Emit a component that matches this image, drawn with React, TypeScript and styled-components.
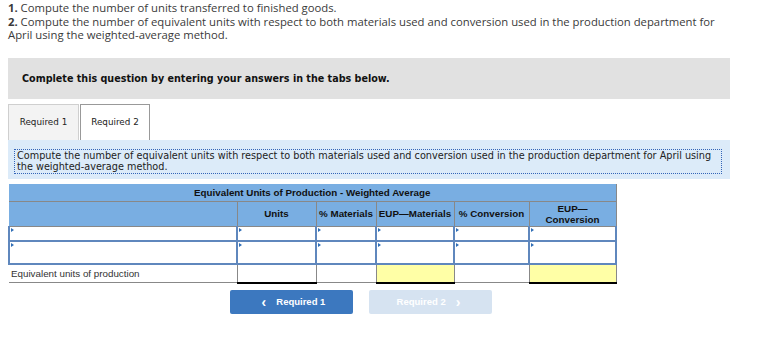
import React from "react";
import styled, { createGlobalStyle } from "styled-components";

const GlobalStyle = createGlobalStyle`
  body {
    margin: 0;
    padding: 0 8px;
    background: #ffffff;
    font-family: "Open Sans", "Liberation Sans", sans-serif;
  }
`;

const columns = [228, 79, 60, 78, 75, 87];

const rows = [{ tall: false }, { tall: true }];

const App = () => {
  return (
    <Page>
      <GlobalStyle />
      <Question>
        <Line>
          <b>1.</b> Compute the number of units transferred to finished goods.
        </Line>
        <Line>
          <b>2.</b> Compute the number of equivalent units with respect to both
          materials used and conversion used in the production department for
          April using the weighted-average method.
        </Line>
      </Question>

      <Notice>Complete this question by entering your answers in the tabs below.</Notice>

      <Tabs>
        <Tab>Required 1</Tab>
        <Tab $active>Required 2</Tab>
      </Tabs>

      <Panel>
        <Prompt>
          Compute the number of equivalent units with respect to both materials
          used and conversion used in the production department for April using
          the weighted-average method.
        </Prompt>
      </Panel>

      <Grid>
        <colgroup>
          {columns.map((w, i) => (
            <col key={i} style={{ width: w }} />
          ))}
        </colgroup>
        <thead>
          <tr>
            <Title colSpan={6}>Equivalent Units of Production - Weighted Average</Title>
          </tr>
          <tr>
            <Head></Head>
            <Head>Units</Head>
            <Head>% Materials</Head>
            <Head>EUP—Materials</Head>
            <Head>% Conversion</Head>
            <Head>
              EUP—
              <br />
              Conversion
            </Head>
          </tr>
        </thead>
        <tbody>
          {rows.map((r, i) => (
            <tr key={i}>
              {columns.map((_, c) => (
                <Input key={c} $tall={r.tall}>
                  <Flag />
                </Input>
              ))}
            </tr>
          ))}
          <tr>
            <Label>Equivalent units of production</Label>
            <Total $boxed />
            <Total />
            <Total $boxed $yellow />
            <Total />
            <Total $boxed $yellow />
          </tr>
        </tbody>
      </Grid>

      <Nav>
        <NavButton>
          <Chev>‹</Chev> Required 1
        </NavButton>
        <NavButton $disabled>
          Required 2 <Chev>›</Chev>
        </NavButton>
      </Nav>
    </Page>
  );
};

export default App;

const Page = styled.div`
  width: 745px;
  padding-top: 1px;
`;

const Question = styled.div`
  width: 712px;
  color: #3a3a3a;
  font-size: 11.3px;
  line-height: 13.5px;
  b {
    font-weight: 700;
  }
`;

const Line = styled.div`
  margin: 0;
`;

const Notice = styled.div`
  margin-top: 16px;
  width: 708px;
  height: 41px;
  padding-left: 14px;
  display: flex;
  align-items: center;
  background: #e1e1e1;
  font-family: "DejaVu Sans", Verdana, sans-serif;
  font-weight: bold;
  font-size: 9.6px;
  color: #111;
`;

const Tabs = styled.div`
  display: flex;
  margin-top: 5px;
  gap: 1px;
`;

const Tab = styled.div<{ $active?: boolean }>`
  width: ${(p) => (p.$active ? "68px" : "69px")};
  height: 35px;
  display: flex;
  align-items: center;
  justify-content: center;
  border: 1px solid ${(p) => (p.$active ? "#999" : "#cfcfcf")};
  border-bottom: none;
  background: ${(p) => (p.$active ? "#fff" : "#f3f3f3")};
  font-family: "DejaVu Sans", Verdana, sans-serif;
  font-size: 8.8px;
  color: #222;
`;

const Panel = styled.div`
  width: 722px;
  height: 39px;
  box-sizing: border-box;
  padding: 9px 8px 0 6px;
  background: #dcebf9;
`;

const Prompt = styled.div`
  border: 1px dotted #3465b8;
  padding: 0 2px;
  font-family: "DejaVu Sans", Verdana, sans-serif;
  font-size: 9.7px;
  line-height: 11.5px;
  color: #222;
`;

const Grid = styled.table`
  margin-top: 5px;
  width: 607px;
  border-collapse: collapse;
  font-family: "Liberation Sans", Arial, sans-serif;
  font-size: 9.8px;
  color: #111;
  table-layout: fixed;
`;

const Title = styled.th`
  height: 17px;
  padding: 0;
  background: #79aee2;
  border-right: 1px solid #888;
  font-weight: bold;
  text-align: center;
`;

const Head = styled.th`
  height: 24px;
  padding: 0;
  background: #79aee2;
  border: 1px solid #888;
  font-weight: bold;
  text-align: center;
  line-height: 11px;
  &:first-child {
    border-left: none;
  }
`;

const Input = styled.td<{ $tall: boolean }>`
  position: relative;
  height: ${(p) => (p.$tall ? "21px" : "13px")};
  padding: 0;
  background: #fff;
  border: 2px solid #5f87bd;
  border-top-width: 1px;
`;

const Flag = styled.span`
  position: absolute;
  top: 1px;
  left: 1px;
  width: 0;
  height: 0;
  border-top: 2px solid transparent;
  border-bottom: 2px solid transparent;
  border-left: 3px solid #2f6db5;
`;

const Label = styled.td`
  height: 17px;
  padding: 0 0 0 2px;
  border-bottom: 1px solid #888;
  border-right: 1px solid #888;
  color: #333;
  white-space: nowrap;
`;

const Total = styled.td<{ $boxed?: boolean; $yellow?: boolean }>`
  height: 17px;
  padding: 0;
  background: ${(p) => (p.$yellow ? "#ffffa6" : "#fff")};
  border-top: 1px solid ${(p) => (p.$boxed ? "#111" : "#888")};
  border-bottom: ${(p) => (p.$boxed ? "2px solid #000" : "1px solid #888")};
  border-left: 1px solid #888;
  border-right: 1px solid #888;
`;

const Nav = styled.div`
  display: flex;
  gap: 16px;
  margin: 6px 0 0 222px;
`;

const NavButton = styled.div<{ $disabled?: boolean }>`
  width: 123px;
  height: 24px;
  display: flex;
  align-items: center;
  justify-content: center;
  gap: 6px;
  border-radius: 2px;
  background: ${(p) => (p.$disabled ? "#d6e3f1" : "#3c78bf")};
  color: #fff;
  font-family: "Liberation Sans", Arial, sans-serif;
  font-weight: bold;
  font-size: 9.5px;
`;

const Chev = styled.span`
  font-size: 14px;
  line-height: 10px;
  margin: 0 4px;
`;
